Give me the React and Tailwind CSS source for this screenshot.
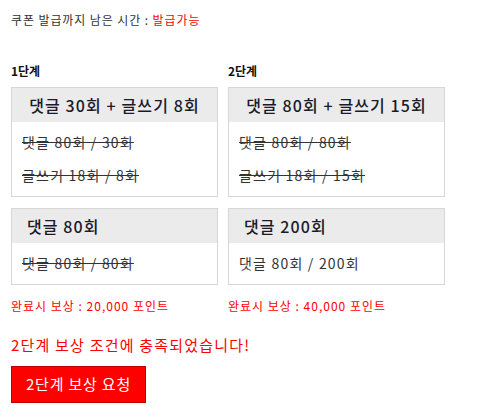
import React from 'react'

const font = { fontFamily: '"Noto Sans CJK KR", "Noto Sans", sans-serif' }

function Card({ title, lines, w, titleLeft, bodyH }) {
  return (
    <div className={`${w} border border-[#d6d6d6] bg-white`}>
      <div
        className={`h-[34px] bg-[#ebebeb] flex items-center text-[16px] font-medium text-[#1a1a2a] tracking-[1.1px] ${titleLeft ? 'pl-[15px]' : 'justify-center'}`}
      >
        {title}
      </div>
      <div className={`${bodyH} flex flex-col justify-center gap-[12px] px-[10px] text-[14px] text-[#333] tracking-[1.2px]`}>
        {lines.map((l, i) => (
          <div key={i} className={l.done ? 'line-through' : ''}>{l.text}</div>
        ))}
      </div>
    </div>
  )
}

export default function App() {
  return (
    <div className="bg-white w-[496px] h-[417px] pl-[11px] pt-[10px] text-[#333]" style={font}>
      <p className="text-[12px] leading-[20px] tracking-[0.9px]">
        쿠폰 발급까지 남은 시간 : <span className="text-[#ff0000]">발급가능</span>
      </p>

      <div className="flex gap-[10px] mt-[33px]">
        {/* 1단계 */}
        <div className="flex flex-col">
          <div className="text-[12px] font-bold text-[#111] leading-[16px] mb-[8px]">1단계</div>
          <Card
            w="w-[207px]"
            title="댓글 30회 + 글쓰기 8회"
            bodyH="h-[74px]"
            lines={[
              { text: '댓글 80회 / 30회', done: true },
              { text: '글쓰기 18회 / 8회', done: true },
            ]}
          />
          <div className="mt-[11px]">
            <Card
              w="w-[207px]"
              title="댓글 80회"
              titleLeft
              bodyH="h-[41px]"
              lines={[{ text: '댓글 80회 / 80회', done: true }]}
            />
          </div>
          <div className="mt-[12px] text-[12px] text-[#ff0000] tracking-[1px]">완료시 보상 : 20,000 포인트</div>
        </div>

        {/* 2단계 */}
        <div className="flex flex-col">
          <div className="text-[12px] font-bold text-[#111] leading-[16px] mb-[8px]">2단계</div>
          <Card
            w="w-[217px]"
            title="댓글 80회 + 글쓰기 15회"
            bodyH="h-[74px]"
            lines={[
              { text: '댓글 80회 / 80회', done: true },
              { text: '글쓰기 18회 / 15회', done: true },
            ]}
          />
          <div className="mt-[11px]">
            <Card
              w="w-[217px]"
              title="댓글 200회"
              titleLeft
              bodyH="h-[41px]"
              lines={[{ text: '댓글 80회 / 200회', done: false }]}
            />
          </div>
          <div className="mt-[12px] text-[12px] text-[#ff0000] tracking-[1px]">완료시 보상 : 40,000 포인트</div>
        </div>
      </div>

      <p className="mt-[19px] text-[15px] text-[#ff0000] tracking-[1.2px]">2단계 보상 조건에 충족되었습니다!</p>

      <button className="mt-[9px] w-[135px] h-[37px] bg-[#ff0000] border border-[#c00000] text-white text-[15px] tracking-[0.8px]">
        2단계 보상 요청
      </button>
    </div>
  )
}
